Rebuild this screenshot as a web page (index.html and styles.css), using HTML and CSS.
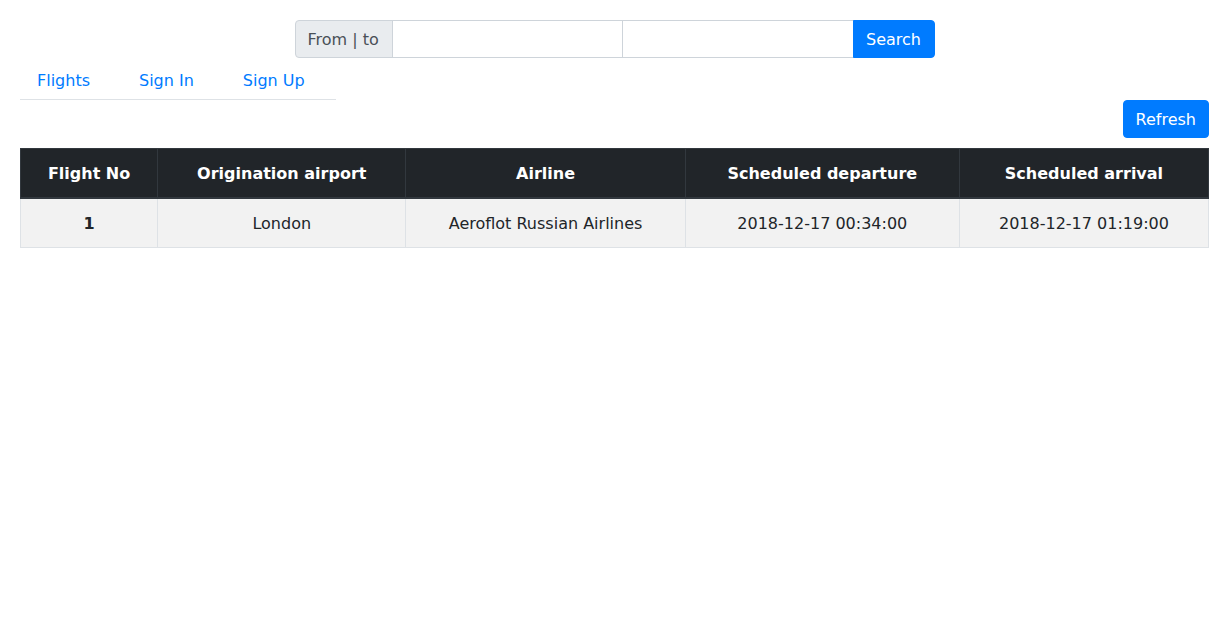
FILE: index.html
```html
<!DOCTYPE html>
<html>
<head>
<meta charset="utf-8">
<link rel="stylesheet" href="styles.css">
</head>
<body>
<div class="page">
  <form class="search">
    <div class="group">
      <span class="prepend">From | to</span>
      <input class="field" type="text">
      <input class="field field-2" type="text">
      <button class="btn btn-search" type="button">Search</button>
    </div>
  </form>
  <ul class="tabs">
    <li><a class="tab" href="#">Flights</a></li>
    <li><a class="tab" href="#">Sign In</a></li>
    <li><a class="tab" href="#">Sign Up</a></li>
  </ul>
  <div class="toolbar">
    <button class="btn" type="button">Refresh</button>
  </div>
  <table class="flights">
    <thead>
      <tr>
        <th>Flight No</th>
        <th>Origination airport</th>
        <th>Airline</th>
        <th>Scheduled departure</th>
        <th>Scheduled arrival</th>
      </tr>
    </thead>
    <tbody>
      <tr>
        <th class="rowhead">1</th>
        <td>London</td>
        <td>Aeroflot Russian Airlines</td>
        <td>2018-12-17 00:34:00</td>
        <td>2018-12-17 01:19:00</td>
      </tr>
    </tbody>
  </table>
</div>
</body>
</html>
```
FILE: styles.css
```css
* { box-sizing: border-box; }
html, body { margin: 0; padding: 0; background: #fff; }
body {
  font-family: "DejaVu Sans", sans-serif;
  font-size: 16px;
  line-height: 1.5;
  color: #212529;
}
.page { padding: 20px; }
.search { display: flex; justify-content: center; margin: 0; }
.group { display: flex; height: 38px; }
.prepend {
  display: flex; align-items: center;
  padding: 1px 12px 0;
  background: #e9ecef;
  color: #495057;
  border: 1px solid #ced4da;
  border-radius: 4px 0 0 4px;
  width: 98px;
  white-space: nowrap;
  flex-shrink: 0;
}
.field {
  width: 231px;
  height: 38px;
  border: 1px solid #ced4da;
  margin-left: -1px;
  padding: 6px 12px;
  font: inherit;
  outline: none;
  flex-shrink: 0;
}
.field-2 { width: 232px; }
.btn {
  font: inherit;
  color: #fff;
  background: #007bff;
  border: 1px solid #007bff;
  border-radius: 4px;
  padding: 7px 12px 5px;
  height: 38px;
  line-height: 24px;
  cursor: pointer;
  white-space: nowrap;
  flex-shrink: 0;
}
.btn-search { border-radius: 0 4px 4px 0; width: 82px; margin-left: -1px; }
.tabs {
  list-style: none;
  margin: 0;
  padding: 0;
  display: flex;
  width: 316px;
  border-bottom: 1px solid #dee2e6;
}
.tabs li { flex-shrink: 0; }
.tab {
  display: block;
  padding: 11px 32px 6px 17px;
  color: #007bff;
  text-decoration: none;
  white-space: nowrap;
}
.toolbar { display: flex; justify-content: flex-end; margin-bottom: 10px; }
.flights {
  width: 100%;
  border-collapse: collapse;
  text-align: center;
}
.flights th, .flights td {
  padding: 13px 12px 11px;
  border: 1px solid #dee2e6;
  vertical-align: top;
  white-space: nowrap;
}
.flights thead th {
  background: #212529;
  color: #fff;
  border-color: #32383e;
  border-bottom-width: 2px;
  font-weight: bold;
}
.flights tbody tr { background: #f2f2f2; }
.rowhead { font-weight: bold; }
```
